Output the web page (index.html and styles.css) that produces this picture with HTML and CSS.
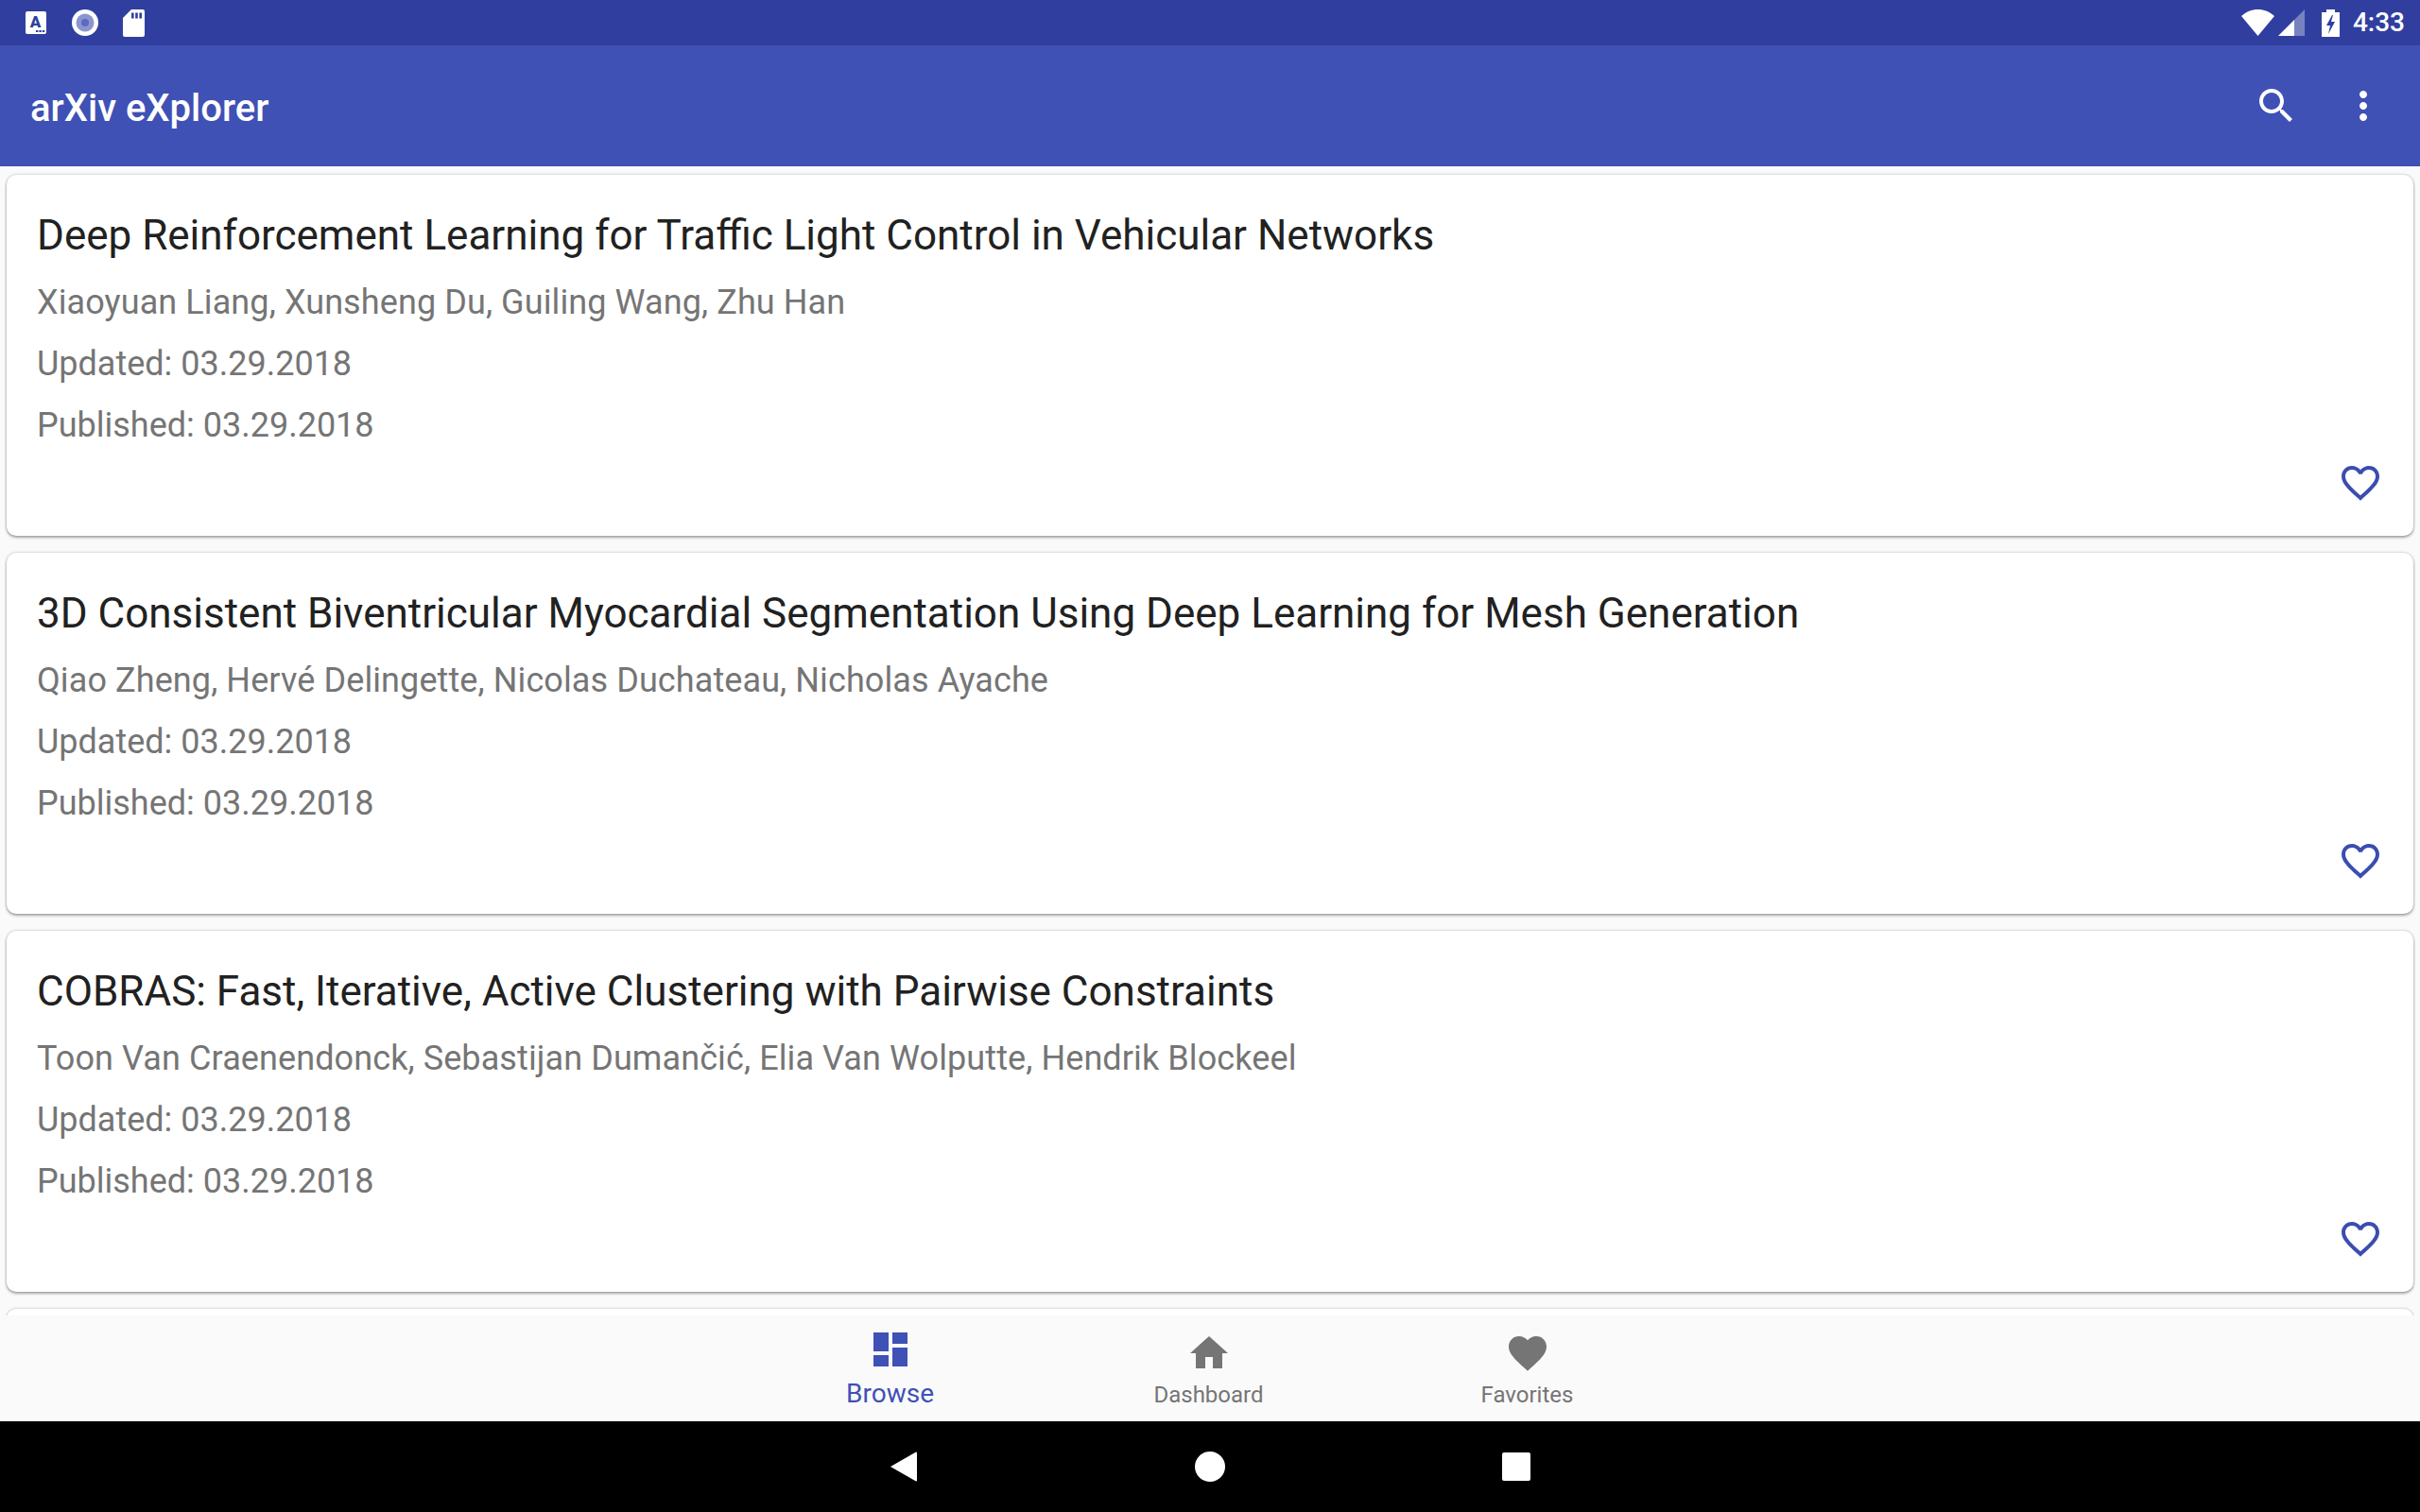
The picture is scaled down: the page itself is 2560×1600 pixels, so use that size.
FILE: index.html
```html
<!DOCTYPE html>
<html lang="en">
<head>
  <meta charset="UTF-8" />
  <title>arXiv eXplorer</title>
  <link rel="stylesheet" href="styles.css">
</head>
<body>
  <div class="screen">
    <div class="status-bar">
      <div class="status-left">
        <svg class="ic-a" viewBox="0 0 22 24">
          <rect x="0" y="0" width="22" height="24" rx="2" fill="#fff"/>
          <text x="10.5" y="17" class="ic-a-letter">A</text>
          <rect x="11" y="20" width="2.4" height="2" fill="#303f9f"/>
          <rect x="14.4" y="20" width="2.4" height="2" fill="#303f9f"/>
          <rect x="17.8" y="20" width="2.4" height="2" fill="#303f9f"/>
        </svg>
        <svg class="ic-circle" viewBox="0 0 28 28">
          <circle cx="14" cy="14" r="14" fill="#fff"/>
          <circle cx="14" cy="14" r="9.5" fill="#8b95d0"/>
          <circle cx="14" cy="14" r="4" fill="#5c6bc0"/>
        </svg>
        <svg class="ic-sd" viewBox="0 0 23 29">
          <path d="M9 0h12a2 2 0 0 1 2 2v25a2 2 0 0 1-2 2H2a2 2 0 0 1-2-2V9z" fill="#fff"/>
          <rect x="9" y="3.5" width="2.6" height="6" fill="#303f9f"/>
          <rect x="13.2" y="3.5" width="2.6" height="6" fill="#303f9f"/>
          <rect x="17.4" y="3.5" width="2.6" height="6" fill="#303f9f"/>
        </svg>
      </div>
      <div class="status-right">
        <svg class="ic-wifi" viewBox="0 0 35 28">
          <path d="M17.5 28L0 7C5 2.5 11 0 17.5 0S30 2.5 35 7z" fill="#fff"/>
        </svg>
        <svg class="ic-signal" viewBox="0 0 28 28">
          <path d="M0 28L17 11v17z" fill="#fff"/>
          <path d="M17 11L28 0v28H17z" fill="#fff" fill-opacity="0.35"/>
        </svg>
        <svg class="ic-battery" viewBox="0 0 19 29">
          <path d="M5 0h9v3h5v26H0V3h5z" fill="#fff"/>
          <path d="M11 6L5 17h4l-2 9 7-13h-4l2-7z" fill="#303f9f"/>
        </svg>
        <span class="clock">4:33</span>
      </div>
    </div>

    <header class="toolbar">
      <h1 class="app-title">arXiv eXplorer</h1>
      <svg class="tool-icon tool-search" viewBox="0 0 24 24">
        <path d="M15.5 14h-.79l-.28-.27C15.41 12.59 16 11.11 16 9.5 16 5.91 13.09 3 9.5 3S3 5.91 3 9.5 5.91 16 9.5 16c1.61 0 3.09-.59 4.23-1.57l.27.28v.79l5 4.99L20.49 19l-4.99-5zm-6 0C7.01 14 5 11.99 5 9.5S7.01 5 9.5 5 14 7.01 14 9.5 11.99 14 9.5 14z"/>
      </svg>
      <svg class="tool-icon" viewBox="0 0 24 24">
        <path d="M12 8c1.1 0 2-.9 2-2s-.9-2-2-2-2 .9-2 2 .9 2 2 2zm0 2c-1.1 0-2 .9-2 2s.9 2 2 2 2-.9 2-2-.9-2-2-2zm0 6c-1.1 0-2 .9-2 2s.9 2 2 2 2-.9 2-2-.9-2-2-2z"/>
      </svg>
    </header>

    <main class="paper-list">
      <article class="card">
        <h2 class="paper-title">Deep Reinforcement Learning for Traffic Light Control in Vehicular Networks</h2>
        <p class="paper-authors">Xiaoyuan Liang, Xunsheng Du, Guiling Wang, Zhu Han</p>
        <p class="paper-meta">Updated: 03.29.2018</p>
        <p class="paper-meta">Published: 03.29.2018</p>
        <svg class="fav-icon" viewBox="0 0 24 24"><path d="M16.5 3c-1.74 0-3.41.81-4.5 2.09C10.91 3.81 9.24 3 7.5 3 4.42 3 2 5.42 2 8.5c0 3.78 3.4 6.86 8.55 11.54L12 21.35l1.45-1.32C18.6 15.36 22 12.28 22 8.5 22 5.42 19.58 3 16.5 3zm-4.4 15.55l-.1.1-.1-.1C7.14 14.24 4 11.39 4 8.5 4 6.5 5.5 5 7.5 5c1.54 0 3.04.99 3.57 2.36h1.87C13.46 5.99 14.96 5 16.5 5c2 0 3.5 1.5 3.5 3.5 0 2.89-3.14 5.74-7.9 10.05z"/></svg>
      </article>
      <article class="card">
        <h2 class="paper-title">3D Consistent Biventricular Myocardial Segmentation Using Deep Learning for Mesh Generation</h2>
        <p class="paper-authors">Qiao Zheng, Hervé Delingette, Nicolas Duchateau, Nicholas Ayache</p>
        <p class="paper-meta">Updated: 03.29.2018</p>
        <p class="paper-meta">Published: 03.29.2018</p>
        <svg class="fav-icon" viewBox="0 0 24 24"><path d="M16.5 3c-1.74 0-3.41.81-4.5 2.09C10.91 3.81 9.24 3 7.5 3 4.42 3 2 5.42 2 8.5c0 3.78 3.4 6.86 8.55 11.54L12 21.35l1.45-1.32C18.6 15.36 22 12.28 22 8.5 22 5.42 19.58 3 16.5 3zm-4.4 15.55l-.1.1-.1-.1C7.14 14.24 4 11.39 4 8.5 4 6.5 5.5 5 7.5 5c1.54 0 3.04.99 3.57 2.36h1.87C13.46 5.99 14.96 5 16.5 5c2 0 3.5 1.5 3.5 3.5 0 2.89-3.14 5.74-7.9 10.05z"/></svg>
      </article>
      <article class="card">
        <h2 class="paper-title">COBRAS: Fast, Iterative, Active Clustering with Pairwise Constraints</h2>
        <p class="paper-authors">Toon Van Craenendonck, Sebastijan Dumančić, Elia Van Wolputte, Hendrik Blockeel</p>
        <p class="paper-meta">Updated: 03.29.2018</p>
        <p class="paper-meta">Published: 03.29.2018</p>
        <svg class="fav-icon" viewBox="0 0 24 24"><path d="M16.5 3c-1.74 0-3.41.81-4.5 2.09C10.91 3.81 9.24 3 7.5 3 4.42 3 2 5.42 2 8.5c0 3.78 3.4 6.86 8.55 11.54L12 21.35l1.45-1.32C18.6 15.36 22 12.28 22 8.5 22 5.42 19.58 3 16.5 3zm-4.4 15.55l-.1.1-.1-.1C7.14 14.24 4 11.39 4 8.5 4 6.5 5.5 5 7.5 5c1.54 0 3.04.99 3.57 2.36h1.87C13.46 5.99 14.96 5 16.5 5c2 0 3.5 1.5 3.5 3.5 0 2.89-3.14 5.74-7.9 10.05z"/></svg>
      </article>
      <article class="card"></article>
    </main>

    <nav class="bottom-nav">
      <div class="nav-item active">
        <svg class="nav-icon" viewBox="0 0 24 24"><path d="M3 13h8V3H3v10zm0 8h8v-6H3v6zm10 0h8V11h-8v10zm0-18v6h8V3h-8z"/></svg>
        <span class="nav-label">Browse</span>
      </div>
      <div class="nav-item">
        <svg class="nav-icon" viewBox="0 0 24 24"><path d="M10 20v-6h4v6h5v-8h3L12 3 2 12h3v8z"/></svg>
        <span class="nav-label">Dashboard</span>
      </div>
      <div class="nav-item">
        <svg class="nav-icon" viewBox="0 0 24 24"><path d="M12 21.35l-1.45-1.32C5.4 15.36 2 12.28 2 8.5 2 5.42 4.42 3 7.5 3c1.74 0 3.41.81 4.5 2.09C13.09 3.81 14.76 3 16.5 3 19.58 3 22 5.42 22 8.5c0 3.78-3.4 6.86-8.55 11.54L12 21.35z"/></svg>
        <span class="nav-label">Favorites</span>
      </div>
    </nav>

    <div class="system-nav">
      <svg class="sys-back" viewBox="0 0 28 32"><path d="M27 0.5a1 1 0 0 1 1 1v29a1 1 0 0 1-1 1L0 16z" fill="#fff"/></svg>
      <div class="sys-home"></div>
      <div class="sys-recent"></div>
    </div>
  </div>
</body>
</html>
```

FILE: styles.css
```css
* {
  box-sizing: border-box;
}
html, body {
  margin: 0;
  padding: 0;
}
body {
  font-family: 'Roboto', 'Liberation Sans', sans-serif;
  background: #fafafa;
}
.screen {
  width: 2560px;
  height: 1600px;
  display: flex;
  flex-direction: column;
  overflow: hidden;
}

/* status bar */
.status-bar {
  height: 48px;
  flex: none;
  background: #303f9f;
  display: flex;
  justify-content: space-between;
  align-items: center;
  padding: 0 16px 0 27px;
}
.status-left, .status-right {
  display: flex;
  align-items: center;
}
.ic-a {
  width: 22px;
  height: 24px;
}
.ic-a-letter {
  font-family: 'Roboto', sans-serif;
  font-size: 17px;
  font-weight: 900;
  text-anchor: middle;
  fill: #303f9f;
}
.ic-circle {
  width: 28px;
  height: 28px;
  margin-left: 27px;
}
.ic-sd {
  width: 23px;
  height: 29px;
  margin-left: 26px;
}
.ic-wifi {
  width: 35px;
  height: 28px;
}
.ic-signal {
  width: 28px;
  height: 28px;
  margin-left: 4px;
}
.ic-battery {
  width: 19px;
  height: 29px;
  margin-left: 18px;
}
.clock {
  color: #fff;
  font-size: 28px;
  font-weight: 500;
  margin-left: 14px;
  line-height: 48px;
}

/* toolbar */
.toolbar {
  height: 128px;
  flex: none;
  background: #3f51b5;
  display: flex;
  align-items: center;
  padding: 0 36px 0 32px;
}
.app-title {
  flex: 1;
  margin: 4px 0 0;
  font-size: 40px;
  font-weight: 500;
  color: #fff;
}
.tool-icon {
  width: 48px;
  height: 48px;
  fill: #fff;
}
.tool-search {
  margin-right: 44px;
}

/* list */
.paper-list {
  flex: 1;
  min-height: 0;
  overflow: hidden;
  padding: 9px 7px 0;
  display: flex;
  flex-direction: column;
  gap: 18px;
}
.card {
  height: 382px;
  flex: none;
  background: #fff;
  border-radius: 10px;
  box-shadow: 0 2px 3px rgba(0,0,0,0.3), 0 0 3px rgba(0,0,0,0.25);
  padding: 33px 32px 32px;
  display: flex;
  flex-direction: column;
}
.paper-title {
  margin: 0 0 8px;
  font-size: 44px;
  font-weight: 400;
  line-height: 62px;
  color: #212121;
}
.paper-authors, .paper-meta {
  margin: 0;
  font-size: 36px;
  line-height: 65px;
  color: #757575;
}
.paper-authors {
  letter-spacing: 0.1px;
}
.fav-icon {
  width: 48px;
  height: 48px;
  fill: #3b4db0;
  margin-top: auto;
  align-self: flex-end;
}

/* bottom navigation */
.bottom-nav {
  height: 112px;
  flex: none;
  background: #fafafa;
  display: flex;
  justify-content: center;
  padding-right: 3px;
}
.nav-item {
  width: 337px;
  display: flex;
  flex-direction: column;
  align-items: center;
  padding-top: 16px;
  color: #757575;
}
.nav-item.active {
  padding-top: 12px;
  color: #3f51b5;
}
.nav-icon {
  width: 48px;
  height: 48px;
  fill: currentColor;
}
.nav-label {
  font-size: 24px;
  line-height: 32px;
  margin-top: 4px;
}
.active .nav-label {
  font-size: 28px;
  margin-top: 7px;
}

/* android nav bar */
.system-nav {
  height: 96px;
  flex: none;
  background: #000;
  display: flex;
  justify-content: center;
  align-items: center;
  gap: 294px;
}
.sys-back {
  width: 28px;
  height: 32px;
  margin-left: 1px;
}
.sys-home {
  width: 32px;
  height: 32px;
  border-radius: 50%;
  background: #fff;
}
.sys-recent {
  width: 30px;
  height: 30px;
  margin-left: -1px;
  border-radius: 2px;
  background: #fff;
}
```
